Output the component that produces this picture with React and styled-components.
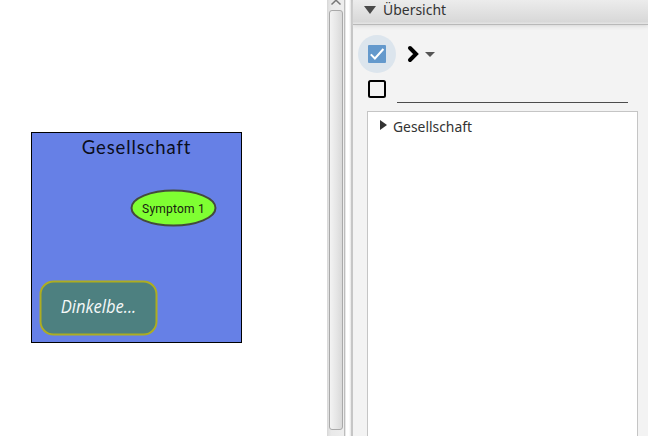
import React from "react";
import styled, { createGlobalStyle } from "styled-components";

const GlobalStyle = createGlobalStyle`
  * { box-sizing: border-box; }
  html, body { margin: 0; overflow: hidden; background: #fff; }
`;

const Workspace = styled.div`
  display: flex;
  width: 648px;
  height: 436px;
  overflow: hidden;
`;

const Canvas = styled.main`
  position: relative;
  flex: 0 0 327px;
  background: #fff;
`;

const GroupNode = styled.section`
  position: absolute;
  left: 31px;
  top: 132px;
  width: 211px;
  height: 211px;
  border: 1px solid #000;
  background: #6680e6;
`;

const GroupTitle = styled.h1`
  margin: 3px 0 0;
  font: 400 18.500px/22px Lato, sans-serif;
  letter-spacing: 0.88px;
  text-align: center;
  color: #0b0e1b;
`;

const SymptomNode = styled.div`
  position: absolute;
  left: 98px;
  top: 56px;
  width: 87px;
  height: 38px;
`;

const SymptomShape = styled.svg`
  display: block;
  width: 87px;
  height: 38px;
`;

const SymptomLabel = styled.span`
  position: absolute;
  inset: 2px 0 0 0;
  display: flex;
  align-items: center;
  justify-content: center;
  font: 400 12px/14px Roboto, sans-serif;
  letter-spacing: 0.2px;
  white-space: nowrap;
  color: #172110;
`;

const FoodNode = styled.div`
  position: absolute;
  left: 7px;
  top: 147px;
  width: 119px;
  height: 56px;
`;

const FoodShape = styled.svg`
  display: block;
  width: 119px;
  height: 56px;
`;

const FoodLabel = styled.span`
  position: absolute;
  inset: 0 0 4px 0;
  display: flex;
  align-items: center;
  justify-content: center;
  font: italic 400 18px/20px "Open Sans", sans-serif;
  transform: scaleX(0.92);
  color: #f4f8f8;
`;

const ScrollTrack = styled.div`
  flex: 0 0 17px;
  display: flex;
  flex-direction: column;
  align-items: center;
  padding-right: 1px;
  border-left: 1px solid #d9d9d9;
  background: linear-gradient(90deg, #dedede, #e9e9e9 20%, #eeeeee);
`;

const ScrollArrow = styled.svg`
  flex: 0 0 10px;
  width: 14px;
  height: 10px;
`;

const ScrollThumb = styled.div`
  width: 14px;
  height: 420px;
  border: 1px solid #a9a9a9;
  border-radius: 3px;
  background: linear-gradient(90deg, #f3f3f3, #e8e8e8 45%, #d9d9d9);
`;

const Splitter = styled.div`
  flex: 0 0 9px;
  border-left: 1px solid #bdbdbd;
  border-right: 2px solid #c6c6c6;
  background: linear-gradient(90deg, #e7e7e7 0 1px, #fff 1px 4px, #e5e5e5);
`;

const Panel = styled.aside`
  flex: 1;
  min-width: 0;
  display: flex;
  flex-direction: column;
  background: #f3f3f3;
`;

const PanelHeader = styled.header`
  flex: 0 0 25px;
  display: flex;
  align-items: center;
  gap: 7px;
  padding: 0 0 4px 11px;
  border-bottom: 1px solid #b9b9b9;
  background: linear-gradient(#ececec, #d8d8d8 22px, #e3e3e3 23px);
  box-shadow: 0 1px 4px #d5d5d5;
  font: 400 15px/20px "Noto Sans", sans-serif;
  color: #333;
`;

const Label = styled.span`
  display: inline-block;
  margin-top: -2px;
  transform-origin: left;
  transform: scaleX(${({ $scale }) => $scale});
  white-space: nowrap;
`;

const Glyph = styled.svg`
  display: block;
  flex: none;
`;

const Toolbar = styled.div`
  display: flex;
  align-items: center;
  padding: 10px 0 0 5px;
`;

const CheckHalo = styled.div`
  display: flex;
  align-items: center;
  justify-content: center;
  width: 38px;
  height: 38px;
  border-radius: 50%;
  background: #dce5ed;
`;

const ModeButton = styled.div`
  display: flex;
  align-items: center;
  gap: 5px;
  margin-left: 11px;
`;

const FilterRow = styled.div`
  display: flex;
  align-items: flex-start;
  height: 30px;
  padding: 7px 20px 0 15px;
`;

const FilterLine = styled.div`
  flex: 1;
  height: 23px;
  margin-left: 11px;
  border-bottom: 1px solid #4c4c4c;
`;

const Tree = styled.div`
  flex: 1;
  margin: 8px 10px 0 14px;
  padding: 5px 0 0 12px;
  border: 1px solid #c5c5c5;
  border-bottom: 0;
  background: #fff;
`;

const TreeItem = styled.div`
  display: flex;
  align-items: center;
  gap: 6px;
  height: 20px;
  font: 400 15px/20px "Noto Sans", sans-serif;
  color: #333;
`;

export default function App() {
  return (
    <>
      <GlobalStyle />
      <Workspace>
        <Canvas>
          <GroupNode>
            <GroupTitle>Gesellschaft</GroupTitle>
            <SymptomNode>
              <SymptomShape>
                <ellipse cx="43.500" cy="19" rx="42" ry="17.500" fill="#7fff32" stroke="#444b3c" strokeWidth="2" />
              </SymptomShape>
              <SymptomLabel>Symptom 1</SymptomLabel>
            </SymptomNode>
            <FoodNode>
              <FoodShape>
                <rect x="1.500" y="1.500" width="116" height="53" rx="13" fill="#4d8080" stroke="#adad21" strokeWidth="2" />
              </FoodShape>
              <FoodLabel>Dinkelbe...</FoodLabel>
            </FoodNode>
          </GroupNode>
        </Canvas>
        <ScrollTrack>
          <ScrollArrow viewBox="0 0 14 10">
            <path d="M2.500 4.500 7 .2l4.500 4.300" fill="none" stroke="#777" strokeWidth="1.500" />
          </ScrollArrow>
          <ScrollThumb />
        </ScrollTrack>
        <Splitter />
        <Panel>
          <PanelHeader>
            <Glyph width="12" height="8">
              <path d="M0 0h12L6 8z" fill="#4a4a4a" />
            </Glyph>
            <Label $scale={0.93}>Übersicht</Label>
          </PanelHeader>
          <Toolbar>
            <CheckHalo>
              <Glyph width="18" height="18">
                <rect width="18" height="18" rx="1" fill="#6499cc" />
                <path d="M2.800 9.400l4.100 4.100L15.400 4" fill="none" stroke="#fff" strokeWidth="2" />
              </Glyph>
            </CheckHalo>
            <ModeButton>
              <Glyph width="13" height="18">
                <path d="M3 3 9 9l-6 6" fill="none" stroke="#000" strokeWidth="4" strokeLinecap="round" />
              </Glyph>
              <Glyph width="10" height="5">
                <path d="M0 0h10L5 5z" fill="#555" />
              </Glyph>
            </ModeButton>
          </Toolbar>
          <FilterRow>
            <Glyph width="18" height="18">
              <rect x="1" y="1" width="16" height="16" rx="1.500" fill="none" stroke="#000" strokeWidth="2" />
            </Glyph>
            <FilterLine />
          </FilterRow>
          <Tree>
            <TreeItem>
              <Glyph width="7" height="14">
                <path d="M0 0v10l7-5z" fill="#333" />
              </Glyph>
              <Label $scale={0.925}>Gesellschaft</Label>
            </TreeItem>
          </Tree>
        </Panel>
      </Workspace>
    </>
  );
}
